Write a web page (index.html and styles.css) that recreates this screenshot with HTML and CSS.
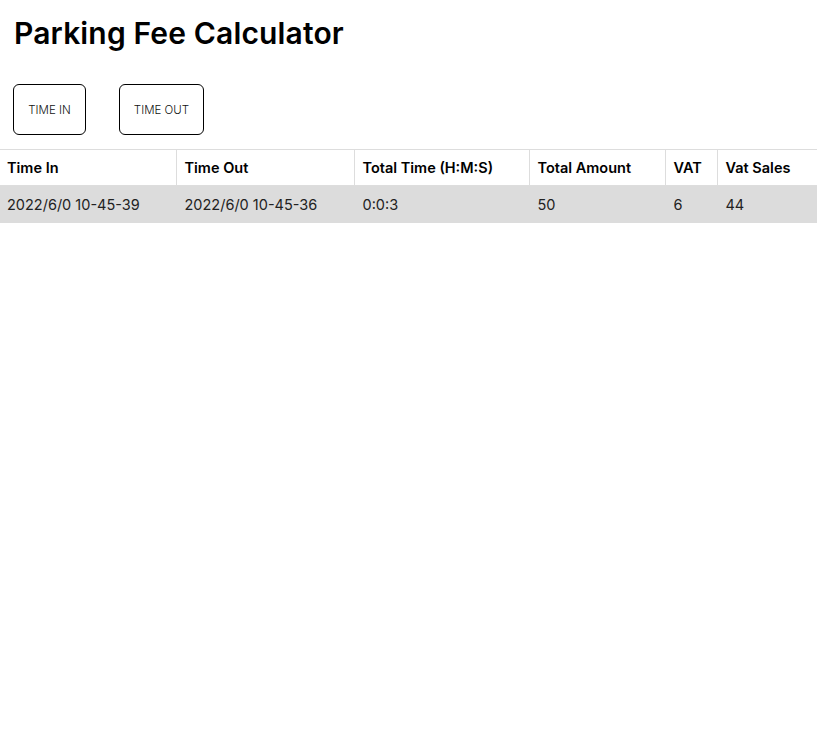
FILE: index.html
```html
<!DOCTYPE html>
<html>
<head>
<meta charset="utf-8">
<link rel="stylesheet" href="styles.css">
</head>
<body>
<div class="top">
  <h1 class="title">Parking Fee Calculator</h1>
  <div class="actions">
    <button class="btn btn-in">TIME IN</button>
    <button class="btn btn-out">TIME OUT</button>
  </div>
</div>
<table class="records">
  <colgroup>
    <col class="c1"><col class="c2"><col class="c3"><col class="c4"><col class="c5"><col class="c6">
  </colgroup>
  <thead>
    <tr><th>Time In</th><th>Time Out</th><th>Total Time (H:M:S)</th><th>Total Amount</th><th>VAT</th><th>Vat Sales</th></tr>
  </thead>
  <tbody>
    <tr><td>2022/6/0 10-45-39</td><td>2022/6/0 10-45-36</td><td>0:0:3</td><td>50</td><td>6</td><td>44</td></tr>
  </tbody>
</table>
</body>
</html>
```
FILE: styles.css
```css
html, body { margin: 0; padding: 0; background: #fff; }
body { font-family: "Inter", "Noto Sans", sans-serif; color: #000; }
.top { padding: 14px 13px 14px 13px; }
.title { margin: 0; padding-left: 1px; font-size: 30px; font-weight: 600; line-height: 38px; letter-spacing: 0.15px; }
.actions { display: flex; gap: 33px; margin-top: 32px; }
.btn { height: 51px; background: #fff; border: 1px solid #000; border-radius: 6px; font-family: inherit; font-size: 11.5px; font-weight: 300; color: #111; padding: 0; cursor: pointer; }
.btn-in { width: 73px; }
.btn-out { width: 85px; }
.records { width: 817px; border-collapse: collapse; table-layout: fixed; }
.c1 { width: 176px; } .c2 { width: 178px; } .c3 { width: 175px; } .c4 { width: 136px; } .c5 { width: 52px; } .c6 { width: 100px; }
.records th, .records td { text-align: left; padding: 0 7px 0 8px; font-size: 14.5px; border: 1px solid #ddd; white-space: nowrap; overflow: hidden; }
.records th { height: 35px; font-weight: 600; }
.records td { height: 36px; font-weight: 400; color: #222; background: #dcdcdc; border-color: #dcdcdc; }
.records tr > :first-child { border-left: none; padding-left: 7px; }
.records tr > :last-child { border-right: none; }
```
